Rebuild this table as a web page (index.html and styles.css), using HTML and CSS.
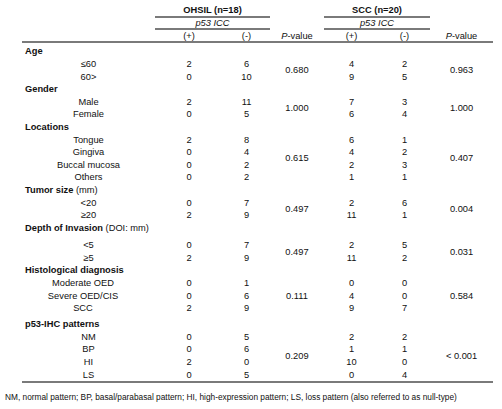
FILE: index.html
```html
<!DOCTYPE html>
<html lang="en">
<head>
<meta charset="utf-8">
<title>p53 ICC table</title>
<link rel="stylesheet" href="styles.css">
</head>
<body>
<table class="tbl">
  <colgroup>
    <col class="c-lab"><col class="c-a"><col class="c-b"><col class="c-p"><col class="c-d"><col class="c-e"><col class="c-q">
  </colgroup>
  <thead>
    <tr class="ha"><th></th><th colspan="2" class="grp">OHSIL (n=18)</th><th></th><th colspan="2" class="grp">SCC (n=20)</th><th></th></tr>
    <tr class="hb"><th></th><th colspan="2" class="sub">p53 ICC</th><th></th><th colspan="2" class="sub">p53 ICC</th><th></th></tr>
    <tr class="hc"><th></th><th>(+)</th><th>(-)</th><th><i>P</i>-value</th><th>(+)</th><th>(-)</th><th><i>P</i>-value</th></tr>
  </thead>
  <tbody>
    <tr class="cat first"><td colspan="7"><b>Age</b></td></tr>
    <tr><td class="lab">≤60</td><td>2</td><td>6</td><td rowspan="2">0.680</td><td>4</td><td>2</td><td rowspan="2">0.963</td></tr>
    <tr><td class="lab">60&gt;</td><td>0</td><td>10</td><td>9</td><td>5</td></tr>

    <tr class="cat"><td colspan="7"><b>Gender</b></td></tr>
    <tr><td class="lab">Male</td><td>2</td><td>11</td><td rowspan="2">1.000</td><td>7</td><td>3</td><td rowspan="2">1.000</td></tr>
    <tr><td class="lab">Female</td><td>0</td><td>5</td><td>6</td><td>4</td></tr>

    <tr class="cat"><td colspan="7"><b>Locations</b></td></tr>
    <tr><td class="lab">Tongue</td><td>2</td><td>8</td><td rowspan="4">0.615</td><td>6</td><td>1</td><td rowspan="4">0.407</td></tr>
    <tr><td class="lab">Gingiva</td><td>0</td><td>4</td><td>4</td><td>2</td></tr>
    <tr><td class="lab">Buccal mucosa</td><td>0</td><td>2</td><td>2</td><td>3</td></tr>
    <tr><td class="lab">Others</td><td>0</td><td>2</td><td>1</td><td>1</td></tr>

    <tr class="cat"><td colspan="7"><b>Tumor size</b> (mm)</td></tr>
    <tr><td class="lab">&lt;20</td><td>0</td><td>7</td><td rowspan="2">0.497</td><td>2</td><td>6</td><td rowspan="2">0.004</td></tr>
    <tr><td class="lab">≥20</td><td>2</td><td>9</td><td>11</td><td>1</td></tr>

    <tr class="cat depth"><td colspan="7"><b>Depth of Invasion</b> (DOI: mm)</td></tr>
    <tr><td class="lab">&lt;5</td><td>0</td><td>7</td><td rowspan="2">0.497</td><td>2</td><td>5</td><td rowspan="2">0.031</td></tr>
    <tr><td class="lab">≥5</td><td>2</td><td>9</td><td>11</td><td>2</td></tr>

    <tr class="cat"><td colspan="7"><b>Histological diagnosis</b></td></tr>
    <tr><td class="lab shift">Moderate OED</td><td>0</td><td>1</td><td rowspan="3">0.111</td><td>0</td><td>0</td><td rowspan="3">0.584</td></tr>
    <tr><td class="lab shift">Severe OED/CIS</td><td>0</td><td>6</td><td>4</td><td>0</td></tr>
    <tr><td class="lab shift">SCC</td><td>2</td><td>9</td><td>9</td><td>7</td></tr>

    <tr class="cat pat"><td colspan="7"><b>p53-IHC patterns</b></td></tr>
    <tr><td class="lab">NM</td><td>0</td><td>5</td><td rowspan="4">0.209</td><td>2</td><td>2</td><td rowspan="4">&lt; 0.001</td></tr>
    <tr><td class="lab">BP</td><td>0</td><td>6</td><td>1</td><td>1</td></tr>
    <tr><td class="lab">HI</td><td>2</td><td>0</td><td>10</td><td>0</td></tr>
    <tr><td class="lab">LS</td><td>0</td><td>5</td><td>0</td><td>4</td></tr>
  </tbody>
</table>
<p class="note">NM, normal pattern; BP, basal/parabasal pattern; HI, high-expression pattern; LS, loss pattern (also referred to as null-type)</p>
</body>
</html>
```

FILE: styles.css
```css
* { box-sizing: border-box; }

body {
  margin: 0;
  background: #fff;
  color: #111;
  font-family: "Liberation Sans", Arial, sans-serif;
}

.tbl {
  margin-left: 22px;
  width: 471px;
  table-layout: fixed;
  border-collapse: separate;
  border-spacing: 0;
  font-size: 9.3px;
  border-bottom: 2px solid #7a7a7a;
}

.c-lab { width: 133px; }
.c-a { width: 68px; }
.c-b { width: 47px; }
.c-p { width: 54px; }
.c-d { width: 55px; }
.c-e { width: 51px; }
.c-q { width: 63px; }

.tbl th,
.tbl td {
  padding: 0;
  text-align: center;
  font-weight: normal;
  line-height: 12.6px;
  vertical-align: middle;
  white-space: nowrap;
}

/* header */
.ha { height: 18px; }
.ha th { vertical-align: bottom; line-height: 11px; }
.ha .grp { font-weight: bold; border-bottom: 2px solid #7a7a7a; }

.hb { height: 12px; }
.hb th { line-height: 10px; }
.hb .sub { font-style: italic; border-bottom: 2px solid #7a7a7a; }

.hc { height: 13px; }
.hc th { vertical-align: bottom; line-height: 9px; border-bottom: 2px solid #7a7a7a; }

/* body */
.tbl tbody tr { height: 12.6px; }

.tbl .cat td { text-align: left; padding-left: 3px; }
.tbl tr.first { height: 15px; }
.tbl tr.first td { vertical-align: bottom; }
.tbl tr.depth { height: 17.5px; }
.tbl tr.depth td { vertical-align: top; }
.tbl tr.pat { height: 16px; }
.tbl tr.pat td { vertical-align: bottom; }

.tbl .shift { padding-right: 11px; }

.note {
  margin: 9px 0 0 5px;
  font-size: 8.3px;
  line-height: 10px;
  white-space: nowrap;
}
```
